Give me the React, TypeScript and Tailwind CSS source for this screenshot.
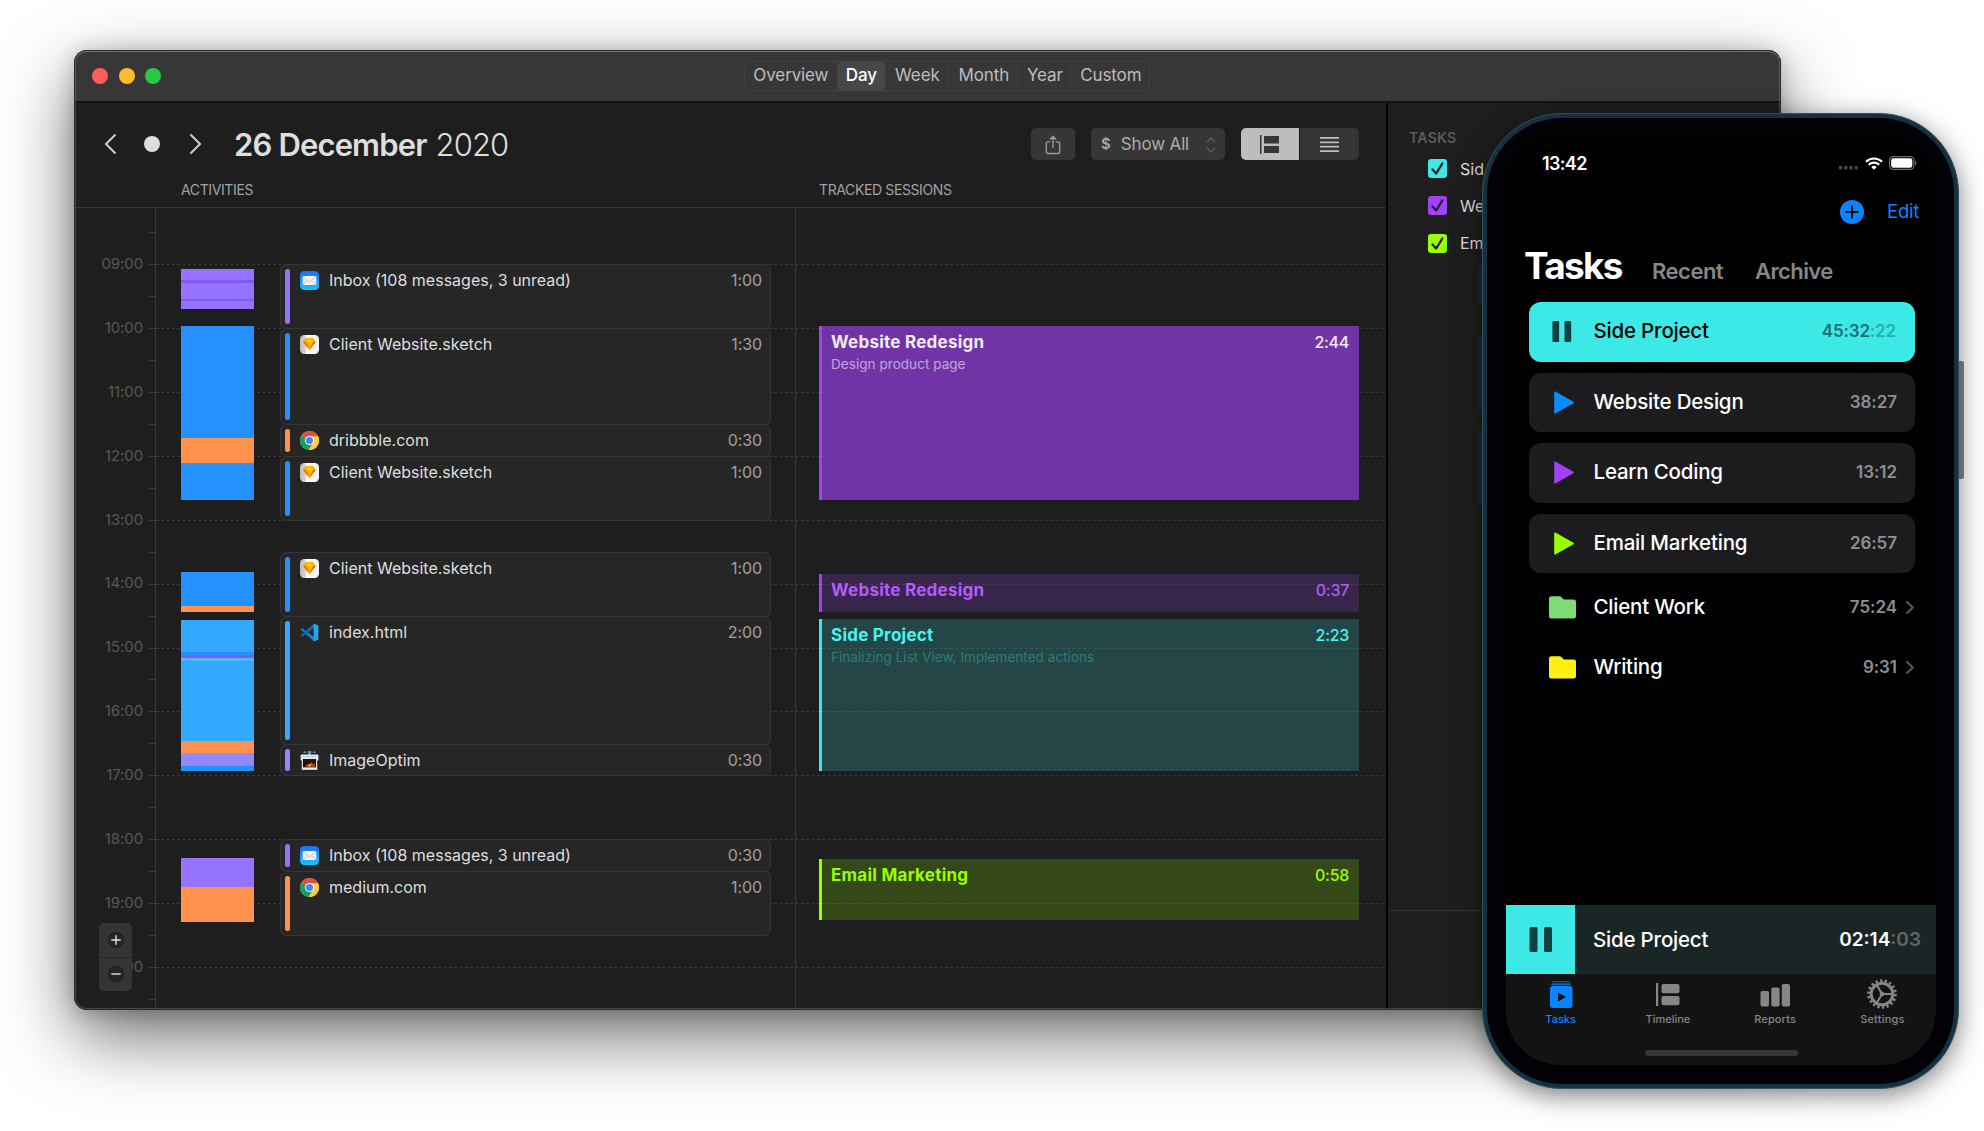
import type { ReactNode } from 'react';

const HOUR = 63.9;
const FIRST = 56.3;
const yOf = (h: number) => FIRST + (h - 9) * HOUR;

type Seg = { h: number; color: string };
type Block = { top: number; segs: Seg[] };

const PURPLE = '#9673ff';
const BLUE = '#2491ff';
const SKY = '#33aaff';
const ORANGE = '#ff924c';
const LAVENDER = '#9488ff';

const blocks: Block[] = [
  {
    top: 61,
    segs: [
      { h: 11, color: PURPLE },
      { h: 3, color: '#8358fb' },
      { h: 16, color: PURPLE },
      { h: 2, color: '#8358fb' },
      { h: 7.5, color: PURPLE },
    ],
  },
  { top: 117.7, segs: [{ h: 112.3, color: BLUE }, { h: 25, color: ORANGE }, { h: 37, color: BLUE }] },
  { top: 364.4, segs: [{ h: 33.9, color: BLUE }, { h: 5.7, color: ORANGE }] },
  {
    top: 412,
    segs: [
      { h: 32.5, color: SKY },
      { h: 3, color: '#2b8fff' },
      { h: 2.5, color: '#7f5cff' },
      { h: 3, color: '#4cbcff' },
      { h: 80, color: SKY },
      { h: 12.5, color: ORANGE },
      { h: 12.5, color: LAVENDER },
      { h: 5.5, color: BLUE },
    ],
  },
  { top: 650, segs: [{ h: 29, color: PURPLE }, { h: 35, color: ORANGE }] },
];

type Act = { from: number; to: number; color: string; icon: ReactNode; name: string; time: string };

function MailIcon() {
  return (
    <svg viewBox="0 0 19 19" className="size-[19px]">
      <defs>
        <linearGradient id="mail" x1="0" y1="0" x2="0" y2="1">
          <stop offset="0" stopColor="#1f6df2" />
          <stop offset="1" stopColor="#19c4fb" />
        </linearGradient>
      </defs>
      <rect width="19" height="19" rx="4.2" fill="url(#mail)" />
      <rect x="2.7" y="4.9" width="13.6" height="9.2" rx="1.3" fill="#f1f1f1" />
      <path d="M3.2 5.4l5.4 5a1.4 1.4 0 0 0 1.8 0l5.4-5M3.2 13.6l4.2-4.2M15.8 13.6l-4.2-4.2" fill="none" stroke="#a9adb3" strokeWidth=".7" />
    </svg>
  );
}

function SketchIcon() {
  return (
    <svg viewBox="0 0 19 19" className="size-[19px]">
      <defs>
        <linearGradient id="paper" x1="0" y1="0" x2="1" y2="0">
          <stop offset="0" stopColor="#bdbdbd" />
          <stop offset=".3" stopColor="#d6d6d6" />
          <stop offset=".34" stopColor="#ffffff" />
          <stop offset="1" stopColor="#f3f3f3" />
        </linearGradient>
      </defs>
      <rect width="19" height="19" rx="4.2" fill="url(#paper)" />
      <path d="M5.6 3.2l3.8-.5 3.8.5 2.6 3.7-6.4 8.2L3 6.9z" fill="#fdb300" />
      <path d="M3 6.9h3.1l3.3 8.2z" fill="#ea6c00" />
      <path d="M15.8 6.9h-3.1l-3.3 8.2z" fill="#ea6c00" />
      <path d="M6.1 6.9h6.6l-3.3 8.2z" fill="#fdad00" />
      <path d="M6.1 6.9l3.3-4.2 3.3 4.2z" fill="#fed305" />
      <path d="M5.6 3.2L3 6.9h3.1l3.3-4.2zM13.2 3.2l2.6 3.7h-3.1L9.4 2.7z" fill="#fdb300" />
    </svg>
  );
}

function ChromeIcon() {
  return (
    <svg viewBox="0 0 20 20" className="size-[19px]">
      <circle cx="10" cy="10" r="10" fill="#ffcd40" />
      <path d="M10 10L1.34 5A10 10 0 0 1 18.66 5z" fill="#dd5044" />
      <path d="M10 10L1.34 5A10 10 0 0 0 9.2 20L13.6 12.3z" fill="#17a05e" />
      <path d="M10 5.4h8.9A10 10 0 0 1 9.2 20l4.8-7.7z" fill="#ffcd40" />
      <circle cx="10" cy="10" r="4.8" fill="#f4f4f4" />
      <circle cx="10" cy="10" r="3.7" fill="#4a86f0" />
    </svg>
  );
}

function CodeIcon() {
  return (
    <svg viewBox="0 0 19 19" className="size-[19px]">
      <path d="M.6 6.6l1.5-1.3 12 8.6v4.7z" fill="#1284cf" />
      <path d="M.6 12.4l1.5 1.3 12-8.6V.4z" fill="#0b6cb4" />
      <path d="M13.6.4L18.4 2.6V16.4L13.6 18.6z" fill="#28a4ee" />
    </svg>
  );
}

function OptimIcon() {
  return (
    <svg viewBox="0 0 19 19" className="size-[19px]">
      <path d="M9.5 0v5" stroke="#b9b9b9" strokeWidth="2" />
      <path d="M4.5 1.2h9" stroke="#8c8c8c" strokeWidth=".7" />
      <circle cx="4.3" cy="1.2" r=".9" fill="#35b8f1" />
      <circle cx="14.7" cy="1.2" r=".9" fill="#35b8f1" />
      <rect x=".6" y="3.6" width="17.8" height="5.8" rx="1" fill="#e6e6e6" />
      <path d="M3 5.6h13" stroke="#6fb6d8" strokeWidth=".8" strokeDasharray="1 .8" />
      <rect x="1.8" y="7.6" width="15.4" height="11.2" fill="#efefef" />
      <rect x="2.9" y="8" width="13.2" height="8.4" fill="#2a0f0a" />
      <path d="M5 15.800l2.500-3 1.500 1 2.500-3 1.500 2.500 2-1v3.500z" fill="#b04a15" />
      <path d="M8 15l2-2.500 1 1.500-1 1.800z" fill="#ffb13c" />
    </svg>
  );
}

const acts: Act[] = [
  { from: 9, to: 10, color: PURPLE, icon: <MailIcon />, name: 'Inbox (108 messages, 3 unread)', time: '1:00' },
  { from: 10, to: 11.5, color: BLUE, icon: <SketchIcon />, name: 'Client Website.sketch', time: '1:30' },
  { from: 11.5, to: 12, color: ORANGE, icon: <ChromeIcon />, name: 'dribbble.com', time: '0:30' },
  { from: 12, to: 13, color: BLUE, icon: <SketchIcon />, name: 'Client Website.sketch', time: '1:00' },
  { from: 13.5, to: 14.5, color: BLUE, icon: <SketchIcon />, name: 'Client Website.sketch', time: '1:00' },
  { from: 14.5, to: 16.5, color: SKY, icon: <CodeIcon />, name: 'index.html', time: '2:00' },
  { from: 16.5, to: 17, color: LAVENDER, icon: <OptimIcon />, name: 'ImageOptim', time: '0:30' },
  { from: 18, to: 18.5, color: PURPLE, icon: <MailIcon />, name: 'Inbox (108 messages, 3 unread)', time: '0:30' },
  { from: 18.5, to: 19.5, color: ORANGE, icon: <ChromeIcon />, name: 'medium.com', time: '1:00' },
];

const sessions = [
  { top: 118, h: 174, cls: 'bg-[#7d38ba]/88 border-[#a042f8] text-white/90', sub: 'text-white/55', name: 'Website Redesign', note: 'Design product page', time: '2:44' },
  { top: 366, h: 38, cls: 'bg-[#a042f8]/20 border-[#a042f8] text-[#b35cfb]', sub: '', name: 'Website Redesign', note: '', time: '0:37' },
  { top: 411, h: 152, cls: 'bg-[#3ee8e6]/20 border-[#3ee8e6] text-[#46f5f3]', sub: 'text-[#2f7c7b]', name: 'Side Project', note: 'Finalizing List View, Implemented actions', time: '2:23' },
  { top: 651, h: 60.5, cls: 'bg-[#8cf000]/20 border-[#9aff00] text-[#9aff00]', sub: '', name: 'Email Marketing', note: '', time: '0:58' },
];

const hours = [9, 10, 11, 12, 13, 14, 15, 16, 17, 18, 19, 20];

function GridLines() {
  const rows = Array.from({ length: 25 }, (_, i) => i);
  return (
    <div className="absolute inset-0 overflow-hidden" style={{ paddingTop: FIRST - HOUR / 2 }}>
      {rows.map((i) => (
        <div key={i} className="flex pl-[75px]" style={{ height: HOUR / 2 }}>
          <div className="h-px w-[7px] bg-[#3a3a3a]" />
          {i % 2 === 1 && (
            <div className="h-px flex-1 bg-[repeating-linear-gradient(90deg,#3a3a3a_0_2.67px,transparent_2.67px_5.33px)]" />
          )}
        </div>
      ))}
    </div>
  );
}

function Timeline() {
  return (
    <div className="relative flex h-[801px] overflow-hidden">
      <GridLines />
      <div className="relative w-[82px] shrink-0 border-r border-[#383838]" style={{ paddingTop: FIRST - HOUR / 2 }}>
        {hours.map((h) => (
          <div key={h} className="flex items-center justify-end pr-[12px] text-[15px] tracking-[-0.1px] text-[#585858]" style={{ height: HOUR }}>
            {String(h).padStart(2, '0')}:00
          </div>
        ))}
        <div className="absolute top-[715px] left-[25px] flex h-[68px] w-[33px] flex-col rounded-[5px] bg-[#353535]">
          <div className="flex flex-1 items-center justify-center border-b border-[#262626]">
            <svg viewBox="0 0 18 18" className="size-[18px]">
              <circle cx="9" cy="9" r="8.6" fill="#252525" />
              <path d="M4.3 9h9.4M9 4.3v9.4" stroke="#e4e4e4" strokeWidth="1.4" />
            </svg>
          </div>
          <div className="flex flex-1 items-center justify-center">
            <svg viewBox="0 0 18 18" className="size-[18px]">
              <circle cx="9" cy="9" r="8.6" fill="#252525" />
              <path d="M4.3 9h9.4" stroke="#a8a8a8" strokeWidth="2" />
            </svg>
          </div>
        </div>
      </div>
      <div className="relative ml-[25px] w-[73px] shrink-0">
        {blocks.map((b, i) => {
          const p = blocks[i - 1];
          const prevEnd = p ? p.top + p.segs.reduce((s, x) => s + x.h, 0) : 0;
          return (
            <div key={b.top} style={{ paddingTop: b.top - prevEnd }}>
              {b.segs.map((s, j) => (
                <div key={j} style={{ height: s.h, backgroundColor: s.color }} />
              ))}
            </div>
          );
        })}
      </div>
      <div className="relative ml-[26px] w-[491px] shrink-0">
        {acts.map((a, i) => {
          const prev = acts[i - 1];
          const gap = yOf(a.from) - (prev ? yOf(prev.to) : 0);
          const h = (a.to - a.from) * HOUR;
          return (
            <div key={i} style={{ paddingTop: gap, height: gap + h }}>
              <div className="flex items-start rounded-[6px] border border-[#363636] bg-[#262626] py-[4px] pr-[8px] pl-[4px]" style={{ height: h + 1 }}>
                <div className="h-full w-[4.5px] shrink-0 rounded-full" style={{ backgroundColor: a.color }} />
                <div className="mt-[2px] ml-[10.5px] shrink-0">{a.icon}</div>
                <div className="mt-[2px] ml-[10px] flex-1 text-[16px] leading-[19px] text-[#dedede]">{a.name}</div>
                <div className="mt-[2px] text-[16px] leading-[19px] tracking-[-0.1px] text-[#a0a0a0]">{a.time}</div>
              </div>
            </div>
          );
        })}
      </div>
      <div className="relative ml-[24px] w-px shrink-0 bg-[#363636]" />
      <div className="relative ml-[23px] w-[540px] shrink-0">
        {sessions.map((s, i) => {
          const p = sessions[i - 1];
          const prevEnd = p ? p.top + p.h : 0;
          return (
            <div key={s.top} style={{ paddingTop: s.top - prevEnd }}>
              <div className={`flex flex-col border-l-[3px] pt-[6px] pr-[10px] pl-[9px] ${s.cls}`} style={{ height: s.h }}>
                <div className="flex justify-between text-[17px] leading-[20px]">
                  <span className="font-bold tracking-[0.25px]">{s.name}</span>
                  <span className="text-[16px] font-medium tracking-[-0.3px]">{s.time}</span>
                </div>
                {s.note && <div className={`mt-[2px] text-[13.5px] leading-[20px] tracking-[0.05px] ${s.sub}`}>{s.note}</div>}
              </div>
            </div>
          );
        })}
      </div>
    </div>
  );
}

function TitleBar() {
  const sep = 'relative after:absolute after:top-[6px] after:right-0 after:h-[18px] after:w-px after:bg-[#444]';
  const items: [string, string][] = [
    ['Overview', 'w-[93px]'],
    ['Day', 'w-[48px] rounded-[6px] bg-[#474747] text-white font-medium'],
    ['Week', `w-[64px] ${sep}`],
    ['Month', `w-[69px] ${sep}`],
    ['Year', `w-[53px] ${sep}`],
    ['Custom', 'w-[79px]'],
  ];
  return (
    <div className="flex h-[53px] items-center border-b-2 border-[#141414] bg-[#373737] pl-[18px]">
      <div className="flex gap-[10.7px]">
        <span className="size-[16px] rounded-full bg-[#ff5f57]" />
        <span className="size-[16px] rounded-full bg-[#febb2e]" />
        <span className="size-[16px] rounded-full bg-[#2ac840]" />
      </div>
      <div className="ml-[583px] flex h-[30px] rounded-[7px] text-[17px] text-[#bdbdbd] ring-1 ring-[#424242] ring-inset">
        {items.map(([t, c]) => (
          <div key={t} className={`flex items-center justify-center pt-px tracking-[-0.12px] ${c}`}>
            {t}
          </div>
        ))}
      </div>
    </div>
  );
}

function Header() {
  return (
    <div className="flex h-[105px] flex-col border-b border-[#353535] pt-[25px]">
      <div className="flex h-[32px] items-center pr-[27px] pl-[30px]">
        <svg viewBox="0 0 13 22" className="h-[22px] w-[13px]">
          <path d="M11.5 1.500L2 11l9.500 9.500" fill="none" stroke="#d0d0d0" strokeWidth="2" />
        </svg>
        <span className="ml-[27px] size-[16px] rounded-full bg-[#dedede]" />
        <svg viewBox="0 0 13 22" className="ml-[29px] h-[22px] w-[13px]">
          <path d="M1.500 1.500L11 11l-9.500 9.500" fill="none" stroke="#d0d0d0" strokeWidth="2" />
        </svg>
        <div className="ml-[32px] flex-1 pt-[2px] text-[31px] leading-[32px] whitespace-nowrap text-[#dedede]">
          <span className="font-semibold tracking-[-0.85px]">26 December</span>
          <span className="ml-[9px] font-light tracking-[-0.95px]">2020</span>
        </div>
        <div className="flex h-[32px] w-[44px] items-center justify-center rounded-[5px] bg-[#363636]">
          <svg viewBox="0 0 18 22" className="mt-px h-[20px] w-[16px]" fill="none" stroke="#9a9a9a" strokeWidth="1.6">
            <path d="M6 7.500H3.200A1.700 1.700 0 0 0 1.500 9.200v9.600a1.700 1.700 0 0 0 1.700 1.700h11.600a1.700 1.700 0 0 0 1.700-1.700V9.200a1.700 1.700 0 0 0-1.700-1.700H12M9 14V1.500M5.400 4.900L9 1.300l3.600 3.600" />
          </svg>
        </div>
        <div className="ml-[16px] flex h-[32px] w-[134px] items-center rounded-[5px] bg-[#363636] pt-px pr-[9px] pl-[10px]">
          <span className="text-[15px] font-semibold text-[#a8a8a8]">$</span>
          <span className="ml-[10px] flex-1 text-[17px] tracking-[-0.15px] text-[#adadad]">Show All</span>
          <svg viewBox="0 0 10 16" className="h-[16px] w-[10px]" fill="none" stroke="#5c5c5c" strokeWidth="1.5">
            <path d="M1 5l4-4 4 4M1 11l4 4 4-4" />
          </svg>
        </div>
        <div className="ml-[16px] flex h-[32px] overflow-hidden rounded-[5px]">
          <div className="flex w-[59px] items-center justify-center border-r border-[#141414] bg-[#bdbdbd]">
            <svg viewBox="0 0 20 19" className="h-[19px] w-[20px]" fill="#363636">
              <path d="M0 0h1.500v19H0zM4 1h15v7.500H4zM4 11h15v7H4z" />
            </svg>
          </div>
          <div className="flex w-[59px] items-center justify-center bg-[#363636]">
            <svg viewBox="0 0 19 15" className="h-[15px] w-[19px]" fill="#bdbdbd">
              <path d="M0 0h19v1.800H0zM0 4.400h19v1.800H0zM0 8.800h19v1.800H0zM0 13.200h19V15H0z" />
            </svg>
          </div>
        </div>
      </div>
      <div className="mt-[20px] flex text-[14px] leading-[20px] tracking-[-0.38px] text-[#a2a2a2]">
        <span className="ml-[107px] w-[638px]">ACTIVITIES</span>
        <span>TRACKED SESSIONS</span>
      </div>
    </div>
  );
}

function Sidebar() {
  const items: [string, string][] = [
    ['Side Project', 'bg-[#3ee8e6]'],
    ['Website Redesign', 'bg-[#a042f8]'],
    ['Email Marketing', 'bg-[#9aff00]'],
  ];
  return (
    <div className="flex flex-1 flex-col border-l-2 border-black">
      <div className="mt-[26px] ml-[21px] text-[14px] leading-[18px] font-semibold tracking-[0.3px] text-[#5c5c5c]">TASKS</div>
      <div className="mt-[12px] ml-[40px] flex flex-col gap-[18px]">
        {items.map(([t, c]) => (
          <div key={t} className="flex h-[19.3px] items-center">
            <span className={`flex size-[19px] items-center justify-center rounded-[3px] ${c}`}>
              <svg viewBox="0 0 13 13" className="size-[13px]">
                <path d="M1.500 7.500l3.700 4L11.300 1.500" fill="none" stroke="#222" strokeWidth="2.300" strokeLinecap="round" strokeLinejoin="round" />
              </svg>
            </span>
            <span className="ml-[13px] w-[24px] overflow-hidden text-[16px] whitespace-nowrap text-[#dedede]">{t}</span>
          </div>
        ))}
      </div>
      <div className="mt-auto h-[100px] border-t border-[#353535]" />
    </div>
  );
}

function Pause({ className }: { className: string }) {
  return (
    <svg viewBox="0 0 24 25" className={className} fill="#10403f">
      <rect x="0.500" y="0" width="8" height="25" rx="1.500" />
      <rect x="15" y="0" width="8" height="25" rx="1.500" />
    </svg>
  );
}

function Phone() {
  const cards: [string, string, string][] = [
    ['Website Design', '38:27', '#0a8cff'],
    ['Learn Coding', '13:12', '#a042f8'],
    ['Email Marketing', '26:57', '#9aff00'],
  ];
  const folders: [string, string, string][] = [
    ['Client Work', '75:24', '#7ddc75'],
    ['Writing', '9:31', '#fff014'],
  ];
  return (
    <div className="absolute top-[113px] left-[1482px] h-[976px] w-[477px]">
      <div className="absolute top-[153px] -left-[4px] h-[38px] w-[6px] rounded-l-[2px] bg-[#1d2a31]" />
      <div className="absolute top-[223px] -left-[4px] h-[75px] w-[6px] rounded-l-[2px] bg-[#1d2a31]" />
      <div className="absolute top-[316px] -left-[4px] h-[75px] w-[6px] rounded-l-[2px] bg-[#1d2a31]" />
      <div className="absolute top-[248px] -right-[5px] h-[118px] w-[6px] rounded-r-[2px] bg-[#7f8a90]" />
      <div className="relative flex h-full rounded-[80px] border border-[#3b4f59] bg-[#153040] p-[4px] shadow-[0_6px_26px_rgba(0,0,0,0.5)]">
        <div className="flex flex-1 rounded-[75px] bg-[#020206] pt-[18px] pr-[18px] pb-[19px] pl-[19px]">
          <div className="flex w-[430px] flex-col overflow-hidden rounded-[54px] bg-black">
            <div className="mt-[17px] flex h-[20px] items-center pr-[19px] pl-[36px]">
              <span className="flex-1 text-[18px] font-semibold tracking-[-0.65px] text-white">13:42</span>
              <svg viewBox="0 0 20 4" className="mt-[9px] mr-[6px] h-[4px] w-[20px]" fill="#4a4a4c">
                <rect x="0" y="0" width="3.200" height="3.600" rx="1" />
                <rect x="5.200" y="0" width="3.200" height="3.600" rx="1" />
                <rect x="10.400" y="0" width="3.200" height="3.600" rx="1" />
                <rect x="15.600" y="0" width="3.200" height="3.600" rx="1" />
              </svg>
              <svg viewBox="0 0 18 13" className="h-[13px] w-[18px]" fill="none" stroke="#fff" strokeWidth="2.200">
                <path d="M1 4.800a11.400 11.400 0 0 1 16 0M3.800 7.800a7.400 7.400 0 0 1 10.400 0" />
                <path d="M9 12.800L6.300 10a3.900 3.900 0 0 1 5.400 0z" fill="#fff" stroke="none" />
              </svg>
              <svg viewBox="0 0 28 14" className="ml-[6px] h-[14px] w-[28px]">
                <rect x=".6" y=".6" width="24.300" height="12.800" rx="3.600" fill="none" stroke="#6c6c6e" strokeWidth="1.200" />
                <rect x="2.200" y="2.200" width="21.100" height="9.600" rx="2.200" fill="#fff" />
                <path d="M26 4.700c1.900.7 1.900 3.900 0 4.600z" fill="#6c6c6e" />
              </svg>
            </div>
            <div className="mt-[27px] flex h-[24px] items-center justify-end pr-[17px]">
              <svg viewBox="0 0 24 24" className="size-[24px]">
                <circle cx="12" cy="12" r="12" fill="#0a84ff" />
                <path d="M12 6.200v11.600M6.200 12h11.600" stroke="#0a0a0a" strokeWidth="1.900" strokeLinecap="round" />
              </svg>
              <span className="mb-px ml-[23px] text-[18.5px] tracking-[-0.25px] text-[#0a84ff]">Edit</span>
            </div>
            <div className="mt-[22px] flex items-baseline pl-[18px] text-[22px] leading-[40px] font-semibold text-[#86868b]">
              <span className="w-[128px] text-[37px] font-bold tracking-[-1.7px] text-white">Tasks</span>
              <span className="w-[103px] tracking-[-0.5px]">Recent</span>
              <span className="tracking-[-0.6px]">Archive</span>
            </div>
            <div className="mt-[11px] flex flex-col gap-[11px] pr-[21px] pl-[22.5px] text-[20.5px] font-medium tracking-[-0.2px]">
              <div className="flex h-[59.5px] items-center rounded-[12px] bg-[#3de9e7] pr-[19px] text-black">
                <Pause className="mr-[22px] ml-[23px] h-[25px] w-[20px]" />
                <span className="flex-1">Side Project</span>
                <span className="text-[17px] font-semibold tracking-[-0.15px] text-[#1d6f6e]">
                  45:32<span className="text-[#2cabaa]">:22</span>
                </span>
              </div>
              {cards.map(([t, time, color]) => (
                <div key={t} className="flex h-[59.5px] items-center rounded-[12px] bg-[#1c1c1e] pr-[18px] text-white">
                  <svg viewBox="0 0 20 23" className="mr-[20px] ml-[25px] h-[23px] w-[20px]">
                    <path d="M1 1.200L19 11.500 1 21.800z" fill={color} stroke={color} strokeWidth="1.600" strokeLinejoin="round" />
                  </svg>
                  <span className="flex-1">{t}</span>
                  <span className="text-[17px] font-semibold tracking-[-0.05px] text-[#8e8e93]">{time}</span>
                </div>
              ))}
            </div>
            <div className="mt-[5px] flex flex-col pr-[21px] pl-[22.5px] text-[20.5px] font-medium tracking-[-0.2px] text-white">
              {folders.map(([t, time, color]) => (
                <div key={t} className="flex h-[59.5px] items-center pl-[20px]">
                  <svg viewBox="0 0 27 23" className="mr-[18px] h-[23px] w-[27px]">
                    <path d="M0 2.500A2.300 2.300 0 0 1 2.300.2h8.200c.8 0 1.300.3 1.800.8l1.600 1.700c.4.500.9.700 1.600.7h9.200A2.300 2.300 0 0 1 27 5.700v14.500a2.300 2.300 0 0 1-2.300 2.300H2.300A2.300 2.300 0 0 1 0 20.200z" fill={color} />
                  </svg>
                  <span className="flex-1">{t}</span>
                  <span className="text-[17px] font-semibold tracking-[-0.05px] text-[#8e8e93]">{time}</span>
                  <svg viewBox="0 0 8 13" className="mr-[1px] ml-[9px] h-[13px] w-[8px]">
                    <path d="M1 1l5.800 5.500L1 12" fill="none" stroke="#5a5a5e" strokeWidth="1.900" strokeLinecap="round" strokeLinejoin="round" />
                  </svg>
                </div>
              ))}
            </div>
            <div className="mt-auto flex h-[69px] items-center bg-[#192625] pr-[15px]">
              <div className="flex h-full w-[69px] items-center justify-center bg-[#3de9e7]">
                <Pause className="h-[25px] w-[24px]" />
              </div>
              <span className="ml-[18px] flex-1 pt-px text-[20.5px] font-medium tracking-[-0.2px] text-white">Side Project</span>
              <span className="pt-px text-[19px] font-semibold text-white">
                02:14<span className="text-[#5f6867]">:03</span>
              </span>
            </div>
            <div className="flex h-[91px] flex-col bg-[#131314]">
              <div className="grid grid-cols-4 pt-[5px] pl-[1px] text-[11px] leading-[16px] font-medium text-[#868686]">
                <div className="flex flex-col items-center gap-[2px] text-[#0a84ff]">
                  <svg viewBox="0 0 30 30" className="size-[30px]">
                    <path d="M6.500 2.600h17" stroke="#0a5cb0" strokeWidth="1.300" />
                    <path d="M5.300 5.100h19.400" stroke="#0a6fd6" strokeWidth="1.600" />
                    <rect x="4" y="7" width="22.500" height="22" rx="3" fill="#0a84ff" />
                    <path d="M12 13.500v9l8-4.500z" fill="#131314" />
                  </svg>
                  <span>Tasks</span>
                </div>
                <div className="flex flex-col items-center gap-[2px]">
                  <svg viewBox="0 0 30 30" className="size-[30px]" fill="#868686">
                    <rect x="3" y="4" width="2.200" height="23" />
                    <rect x="8.500" y="5" width="18" height="9.300" rx="2" />
                    <rect x="8.500" y="17" width="18" height="9.300" rx="2" />
                  </svg>
                  <span>Timeline</span>
                </div>
                <div className="flex flex-col items-center gap-[2px]">
                  <svg viewBox="0 0 30 30" className="size-[30px]" fill="#868686">
                    <rect x="0.500" y="12" width="8.500" height="15.500" rx="1.800" />
                    <rect x="11.300" y="8.500" width="8.300" height="19" rx="1.800" />
                    <rect x="21.800" y="5" width="8.200" height="22.500" rx="1.800" />
                  </svg>
                  <span className="tracking-[0.15px]">Reports</span>
                </div>
                <div className="flex flex-col items-center gap-[2px]">
                  <svg viewBox="0 0 30 30" className="size-[30px]" fill="none" stroke="#868686">
                    <circle cx="15" cy="15" r="13.400" strokeWidth="2.800" strokeDasharray="2.300 2.377" />
                    <circle cx="15" cy="15" r="10.800" strokeWidth="3" />
                    <path d="M15 15h10M15 15L9.800 6M15 15l-5.200 9" strokeWidth="2.100" />
                    <circle cx="15" cy="15" r="1.600" fill="#868686" strokeWidth="1.600" />
                  </svg>
                  <span className="tracking-[0.2px]">Settings</span>
                </div>
              </div>
              <div className="mx-auto mt-[22.5px] h-[6px] w-[153px] rounded-full bg-[#363637]" />
            </div>
          </div>
        </div>
      </div>
    </div>
  );
}

export default function App() {
  return (
    <div className="relative h-[1131px] w-[1984px] overflow-hidden bg-white pt-[50px] pl-[74px] font-['Inter',sans-serif]">
      <div className="relative h-[960px] w-[1707px] rounded-[13px] shadow-[0_26px_70px_rgba(0,0,0,0.58),0_2px_20px_rgba(0,0,0,0.22)]">
        <div className="flex h-full flex-col overflow-hidden rounded-[13px] bg-[#1e1e1e]">
          <TitleBar />
          <div className="flex flex-1">
            <div className="w-[1312px] shrink-0">
              <Header />
              <Timeline />
            </div>
            <Sidebar />
          </div>
        </div>
        <div className="pointer-events-none absolute inset-0 rounded-[13px] shadow-[inset_0_0_0_1px_#2a2a2a,inset_0_2px_0_0_#757575,inset_0_0_0_2px_rgba(255,255,255,0.18)]" />
      </div>
      <Phone />
    </div>
  );
}
